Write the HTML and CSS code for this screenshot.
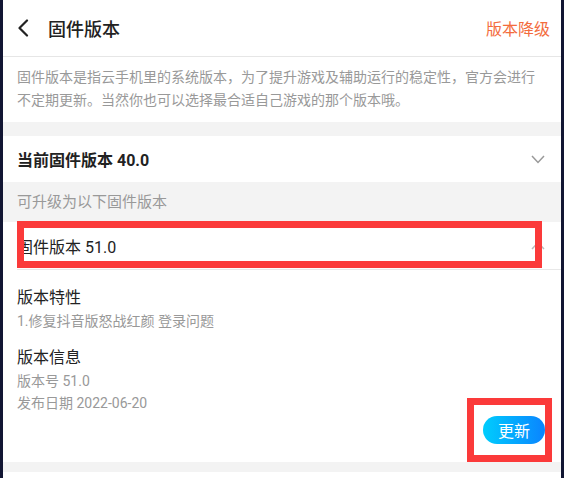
FILE: index.html
```html
<!DOCTYPE html>
<html lang="zh-CN">
<head>
<meta charset="utf-8">
<title>固件版本</title>
<link rel="stylesheet" href="styles.css">
</head>
<body>
<div class="screen">
  <header class="topbar">
    <div class="topbar-left">
      <svg class="back" width="12" height="18" viewBox="0 0 12 18"><path d="M10 1.5 L2.5 9 L10 16.5" fill="none" stroke="#222" stroke-width="2.2" stroke-linecap="round" stroke-linejoin="round"/></svg>
      <span class="title">固件版本</span>
    </div>
    <span class="downgrade">版本降级</span>
  </header>
  <p class="intro">固件版本是指云手机里的系统版本，为了提升游戏及辅助运行的稳定性，官方会进行不定期更新。当然你也可以选择最合适自己游戏的那个版本哦。</p>
  <div class="band"></div>
  <div class="row current">
    <span class="row-title bold">当前固件版本 40.0</span>
    <svg width="14" height="9" viewBox="0 0 14 9"><path d="M1 1 L7 7.5 L13 1" fill="none" stroke="#999" stroke-width="1.5"/></svg>
  </div>
  <div class="section-label">可升级为以下固件版本</div>
  <div class="row option">
    <span class="row-title">固件版本 51.0</span>
    <svg width="14" height="9" viewBox="0 0 14 9"><path d="M1 8 L7 1.5 L13 8" fill="none" stroke="#bbb" stroke-width="1.5"/></svg>
  </div>
  <div class="details">
    <div class="d-title">版本特性</div>
    <div class="d-text">1.修复抖音版怒战红颜 登录问题</div>
    <div class="d-title gap">版本信息</div>
    <div class="d-text">版本号 51.0</div>
    <div class="d-text">发布日期 2022-06-20</div>
    <div class="actions"><button class="update">更新</button></div>
  </div>
  <div class="band thin"></div>
  <div class="mark mark-row"></div>
  <div class="mark mark-btn"></div>
</div>
</body>
</html>
```
FILE: styles.css
```css
html, body {
  margin: 0;
  padding: 0;
  background: #121633;
}
body {
  font-family: Roboto, "Noto Sans CJK SC", sans-serif;
  color: #222;
}
.screen {
  position: relative;
  margin: 0 3px 0 3px;
  height: 478px;
  background: #fff;
  overflow: hidden;
}
.topbar {
  height: 56px;
  border-bottom: 1px solid #e6e6e6;
  display: flex;
  align-items: center;
  justify-content: space-between;
  padding: 0 11px 0 14px;
}
.topbar-left {
  display: flex;
  align-items: center;
  gap: 19px;
}
.back { display: block; }
.title {
  font-size: 18px;
  font-weight: 500;
  color: #222;
}
.downgrade {
  font-size: 16px;
  color: #f36c3d;
}
.intro {
  margin: 0;
  padding: 9px 14px 10px;
  font-size: 14px;
  line-height: 23px;
  color: #999;
}
.band {
  height: 14px;
  background: #f3f3f3;
}
.band.thin { height: 10px; }
.row {
  display: flex;
  align-items: center;
  justify-content: space-between;
  padding: 0 16px 0 14px;
}
.row.current { height: 46px; }
.row.option {
  height: 47px;
  border-bottom: 1px solid #e8e8e8;
  margin-left: 14px;
  padding-left: 0;
}
.row-title {
  font-size: 16px;
  color: #222;
}
.row-title.bold { font-weight: 700; }
.section-label {
  height: 40px;
  line-height: 40px;
  padding: 0 14px;
  background: #f3f3f3;
  font-size: 15px;
  color: #999;
}
.details {
  padding: 16px 16px 18px 14px;
  display: flex;
  flex-direction: column;
}
.d-title {
  font-size: 16px;
  line-height: 24px;
  color: #222;
}
.d-title.gap { margin-top: 14px; }
.d-text {
  font-size: 14px;
  line-height: 22px;
  color: #999;
}
.d-text:first-of-type { margin-top: 2px; }
.actions {
  display: flex;
  justify-content: flex-end;
  margin-top: 2px;
}
.update {
  width: 62px;
  height: 28px;
  border: 0;
  border-radius: 14px;
  background: linear-gradient(90deg, #00cdfd, #0a84ff);
  color: #fff;
  font-family: Roboto, "Noto Sans CJK SC", sans-serif;
  font-size: 16px;
  padding: 0;
}
.mark {
  position: absolute;
  border: 7px solid #fb3a3a;
  box-sizing: border-box;
}
.mark-row {
  left: 14px;
  top: 221px;
  width: 525px;
  height: 47px;
}
.mark-btn {
  left: 464px;
  top: 398px;
  width: 85px;
  height: 64px;
}
```
